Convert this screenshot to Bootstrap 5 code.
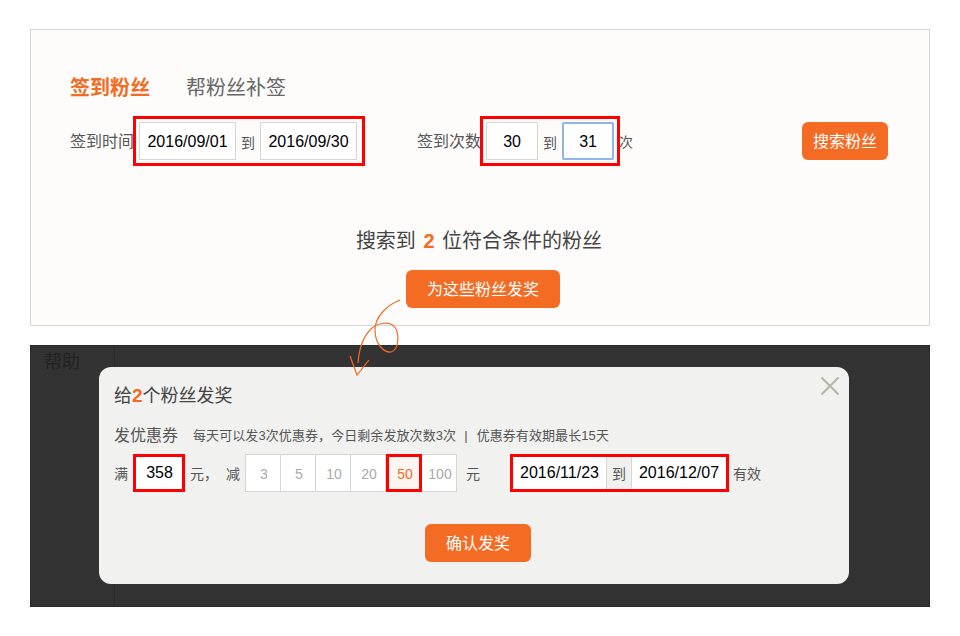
<!DOCTYPE html>
<html lang="zh">
<head>
<meta charset="utf-8">
<title>签到粉丝</title>
<link rel="stylesheet" href="https://cdn.jsdelivr.net/npm/bootstrap@5.3.0/dist/css/bootstrap.min.css">
<style>
body{background:#fff;font-family:"Liberation Sans","Noto Sans CJK SC",sans-serif;color:#555;font-size:14px;line-height:20px}
.stage{margin:29px 30px 0;width:900px;position:relative}
.top-panel{height:297px;background:#fdfcfa;border:1px solid #d8d6d3;padding:44px 39px 0}
.tab-row{gap:36px;font-size:20px;line-height:28px;margin-bottom:14px}
.tab-on{color:#f46b24;font-weight:700}
.tab-off{color:#666}
.query-row{height:50px;font-size:16px}
.row-label{padding-top:2px}
.red-frame{border:3px solid #f00;height:50px;padding:3px 5px 3px 3px;align-items:center}
.field.form-control{width:97px;height:38px;padding:0;border:1px solid #d6d6d6;border-radius:0;background:#fff;color:#000;font-size:16px;line-height:38px;text-align:center;flex:none}
.field.narrow{width:52px}
.field.active{border:2px solid #8fb4ee;border-radius:2px;line-height:36px}
.sep{width:24px;text-align:center;font-size:14px;color:#555;padding-top:3px}
.count-frame{margin-left:-1px;padding-left:3px;padding-right:3px}
.date-frame{margin-left:-1px}
.label-gap{margin-left:52px}
.after-gap{margin-left:-1px;padding-top:2px;font-size:14px}
.orange-btn.btn{background:#f46b24;border:0;color:#fff;border-radius:6px;height:38px;font-size:16px;line-height:40px;padding:0}
.search-btn{width:86px;margin-left:169px}
.result-txt{font-size:20px;line-height:30px;color:#444;text-align:center;margin:60px 2px 14px 0;word-spacing:2px}
.result-txt b,.modal-title-txt b{color:#f46b24}
.give-btn{width:154px;display:block;margin:0 auto;position:relative;left:3px}
.dark-panel{height:262px;margin-top:19px;background:#333;border:1px solid #2b2b2b;position:relative}
.help-col{width:84px;height:100%;border-right:1px solid #2b2b2b;padding:5px 0 0 13px;font-size:18px;line-height:22px;color:#222}
.coupon-dialog{position:absolute;left:68px;top:21px;width:750px;height:217px;background:#f1f1ef;border-radius:12px;padding:16px 15px 0}
.modal-title-txt{font-size:18px;line-height:26px;color:#444;margin-bottom:15px}
.modal-title-txt b{font-size:19px}
.close-x{position:absolute;right:9px;top:9px;width:20px;height:20px}
.coupon-head{font-size:16px;line-height:24px;color:#555;margin-bottom:6px}
.coupon-note{font-size:13px;margin-left:15px;color:#555;letter-spacing:.08px}
.note-pipe{margin:0 9px 0 8px}
.coupon-row{height:38px;font-size:14px}
.coupon-row>span{padding-top:2px}
.plain-frame{border:3px solid #f00;background:#fff;height:38px;width:52px;margin:0 5px;padding-left:1px;text-align:center;font-size:16px;line-height:32px;color:#000}
.amount-group{margin-left:5px;margin-right:9px}
.amount-group .btn{width:36px;height:38px;padding:0 0 0 2px;border:1px solid #d6d6d6;border-radius:0;background:#fff;color:#aaa;font-size:14px;line-height:38px;margin-left:-1px;flex:none}
.amount-group .btn:first-child{margin-left:0}
.amount-group .btn.picked{border:3px solid #f00;color:#f46b24;background:#fdf6f1;line-height:34px;position:relative;z-index:1;margin-left:0}
.valid-frame{border:3px solid #f00;height:38px;width:219px;background:#fff;margin-left:30px;margin-right:4px}
.valid-frame .dt{width:93px;flex:none;text-align:center;font-size:16px;line-height:32px;color:#000}
.valid-frame .dt:last-child{width:94px}
.valid-frame .mid{flex:1;background:#f0f0ee;border-left:1px solid #d6d6d6;border-right:1px solid #d6d6d6;text-align:center;line-height:34px;color:#555}
.confirm-btn{width:106px;display:block;margin:32px 0 0 311px}
.squiggle{position:absolute;left:320px;top:270px;width:60px;height:80px;z-index:3;overflow:visible}
</style>
</head>
<body>
<div class="stage">
  <section class="top-panel">
    <div class="d-flex tab-row">
      <div class="tab-on">签到粉丝</div>
      <div class="tab-off">帮粉丝补签</div>
    </div>
    <div class="d-flex align-items-center query-row">
      <span class="row-label">签到时间</span>
      <div class="d-flex red-frame date-frame">
        <span class="form-control field">2016/09/01</span>
        <span class="sep">到</span>
        <span class="form-control field">2016/09/30</span>
      </div>
      <span class="label-gap row-label">签到次数</span>
      <div class="d-flex red-frame count-frame">
        <span class="form-control field narrow">30</span>
        <span class="sep">到</span>
        <span class="form-control field narrow active">31</span>
      </div>
      <span class="after-gap">次</span>
      <button class="btn orange-btn search-btn" type="button">搜索粉丝</button>
    </div>
    <div class="result-txt">搜索到 <b>2</b> 位符合条件的粉丝</div>
    <button class="btn orange-btn give-btn" type="button">为这些粉丝发奖</button>
  </section>
  <section class="dark-panel">
    <div class="help-col">帮助</div>
    <div class="coupon-dialog">
      <svg class="close-x" viewBox="0 0 20 20" aria-hidden="true"><path d="M1.5 1.5 18.5 18.5M18.5 1.5 1.5 18.5" stroke="#b3b5a6" stroke-width="2" fill="none"/></svg>
      <div class="modal-title-txt">给<b>2</b>个粉丝发奖</div>
      <div class="d-flex align-items-center coupon-head"><span>发优惠券</span><span class="coupon-note">每天可以发3次优惠券，今日剩余发放次数3次<span class="note-pipe">|</span>优惠券有效期最长15天</span></div>
      <div class="d-flex align-items-center coupon-row">
        <span>满</span>
        <div class="plain-frame">358</div>
        <span>元，</span>
        <span class="ms-2">减</span>
        <div class="d-flex amount-group" role="group">
          <button class="btn" type="button">3</button>
          <button class="btn" type="button">5</button>
          <button class="btn" type="button">10</button>
          <button class="btn" type="button">20</button>
          <button class="btn picked" type="button">50</button>
          <button class="btn" type="button">100</button>
        </div>
        <span>元</span>
        <div class="d-flex valid-frame">
          <span class="dt">2016/11/23</span>
          <span class="mid">到</span>
          <span class="dt">2016/12/07</span>
        </div>
        <span>有效</span>
      </div>
      <button class="btn orange-btn confirm-btn" type="button">确认发奖</button>
    </div>
  </section>
  <svg class="squiggle" viewBox="350 299 60 80" aria-hidden="true"><path d="M400 300C385 306 375 318 375 330 375 345 385 353 391 352 399 350 399 335 396 329 391 320 378 323 372 328 363 336 359 350 358 363M350 356 357 375 369 360" fill="none" stroke="#f46b24" stroke-width="1.2"/></svg>
</div>
<script src="https://cdn.jsdelivr.net/npm/bootstrap@5.3.0/dist/js/bootstrap.bundle.min.js"></script>
</body>
</html>
